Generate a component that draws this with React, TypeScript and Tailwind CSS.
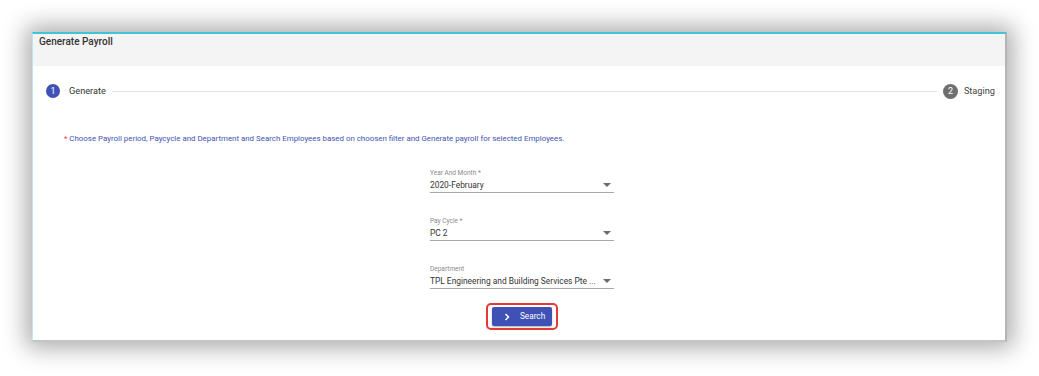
import React from "react";

function Field({ label, value }: { label: string; value: string }) {
  return (
    <div className="w-[184px]">
      <div className="h-[8px] text-[6.5px] leading-[8px] text-[#8a8a8a]">{label}</div>
      <div className="mt-[2px] h-[14px] flex items-start justify-between border-b border-[#a9a9a9]">
        <span className="text-[8.4px] leading-[12px] text-[#333] whitespace-nowrap">{value}</span>
        <svg width="8" height="4" viewBox="0 0 8 4" className="mt-[4px] mr-[3px]">
          <path d="M0 0 L8 0 L4 4 Z" fill="#6b6b6b" />
        </svg>
      </div>
    </div>
  );
}

export default function App() {
  return (
    <div className="w-[1039px] h-[376px] bg-white overflow-hidden pt-[32px] pl-[32px]" style={{ fontFamily: "Roboto, 'Liberation Sans', sans-serif" }}>
      <div className="w-[975px] h-[310px] bg-white border-t-[2px] border-t-[#40c4d6] border-l border-l-[#bfe6ec] border-r-[2px] border-r-[#b5b5b5] border-b-[2px] border-b-[#c4c4c4] shadow-[0_0_22px_6px_rgba(0,0,0,0.33)] flex flex-col">
        <div className="h-[32px] bg-[#f4f4f4] pt-[2px] pl-[6px] text-[10px] leading-[12px]">
          <span className="font-medium text-[#333]">Generate Payroll</span>
        </div>
        <div className="flex-1 flex flex-col pl-[13px] pr-[10px] pt-[18px]">
          <div className="h-[14px] flex items-center">
            <div className="w-[14px] h-[14px] rounded-full bg-[#3f51b5] text-white text-[9px] leading-[14px] text-center">1</div>
            <span className="ml-[9px] text-[9.2px] text-[#333]">Generate</span>
            <div className="flex-1 mx-[6px] h-px bg-[#e2e2e2]"></div>
            <div className="w-[15px] h-[15px] rounded-full bg-[#6f6f6f] text-white text-[9px] leading-[15px] text-center">2</div>
            <span className="ml-[6px] text-[9.2px] text-[#444]">Staging</span>
          </div>
          <div className="mt-[36px] pl-[18px] h-[10px] text-[7.9px] leading-[10px] text-[#4353b3] whitespace-nowrap">
            <span className="text-[#f44336]">*</span> Choose Payroll period, Paycycle and Department and Search Employees based on choosen filter and Generate payroll for selected Employees.
          </div>
          <div className="mt-[25px] flex flex-col items-center pl-[3px] gap-[24px]">
            <Field label="Year And Month *" value="2020-February" />
            <Field label="Pay Cycle *" value="PC 2" />
            <Field label="Department" value="TPL Engineering and Building Services Pte ..." />
          </div>
          <div className="mt-[14px] flex justify-center pl-[3px]">
            <div className="border-2 border-[#e53935] rounded-[5px] px-[4px] py-[2px]">
              <button className="w-[60px] h-[19px] bg-[#3f51b5] rounded-[2px] flex items-center text-white text-[8.2px] shadow-[0_1px_2px_rgba(0,0,0,0.3)]">
                <svg width="8" height="8" viewBox="0 0 8 8" className="ml-[11px]">
                  <path d="M2.5 1 L5.5 4 L2.5 7" stroke="white" strokeWidth="1.5" fill="none" />
                </svg>
                <span className="ml-[9px]">Search</span>
              </button>
            </div>
          </div>
        </div>
      </div>
    </div>
  );
}
